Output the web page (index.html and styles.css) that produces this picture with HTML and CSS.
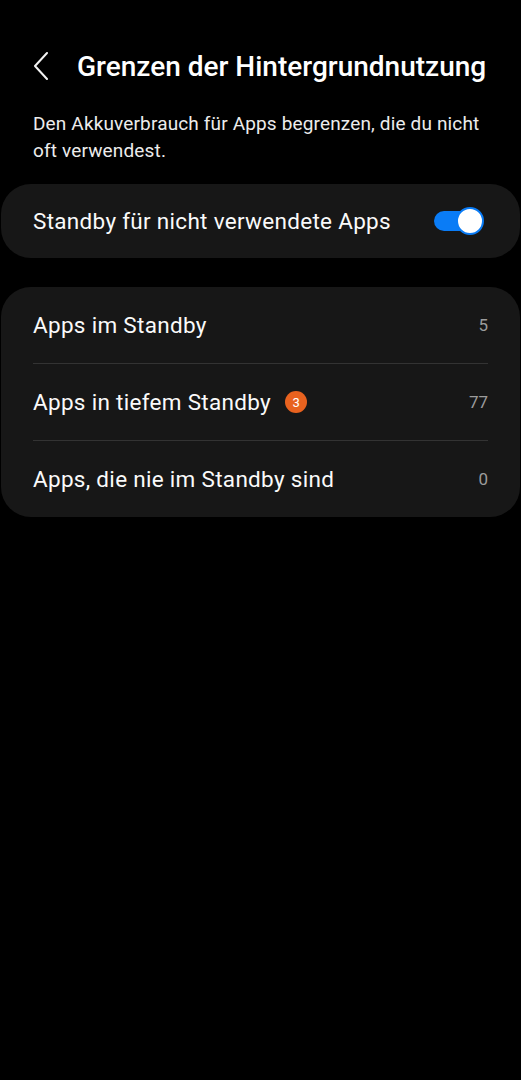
FILE: index.html
```html
<!DOCTYPE html>
<html lang="de">
<head>
    <meta charset="UTF-8">
    <meta name="viewport" content="width=device-width, initial-scale=1.0">
    <title>Grenzen der Hintergrundnutzung</title>
    <link rel="stylesheet" href="styles.css">
</head>
<body>
    <div class="header">
        <button class="back-btn" aria-label="Zurück">
            <svg width="16" height="28" viewBox="0 0 16 28"><path d="M14 1 L2 14 L14 27" fill="none" stroke="#f2f2f2" stroke-width="2" stroke-linecap="round" stroke-linejoin="round"/></svg>
        </button>
        <h1 class="title">Grenzen der Hintergrundnutzung</h1>
    </div>
    <p class="description">Den Akkuverbrauch für Apps begrenzen, die du nicht oft verwendest.</p>

    <div class="card toggle-card">
        <span class="row-label">Standby für nicht verwendete Apps</span>
        <div class="switch"><div class="knob"></div></div>
    </div>

    <div class="card list-card">
        <div class="list-row">
            <span class="row-label">Apps im Standby</span>
            <span class="row-value">5</span>
        </div>
        <div class="list-row">
            <span class="row-label">Apps in tiefem Standby <span class="badge">3</span></span>
            <span class="row-value">77</span>
        </div>
        <div class="list-row">
            <span class="row-label">Apps, die nie im Standby sind</span>
            <span class="row-value">0</span>
        </div>
    </div>
</body>
</html>
```

FILE: styles.css
```css
html, body {
    margin: 0;
    background: #000;
}
body {
    font-family: Roboto, "Noto Sans", sans-serif;
    color: #fafafa;
}
.header {
    display: flex;
    align-items: center;
    height: 48px;
    margin-top: 42px;
    padding-left: 33px;
}
.back-btn {
    background: none;
    border: none;
    padding: 0;
    width: 44px;
    height: 28px;
    display: flex;
    align-items: center;
}
.title {
    margin: 0;
    font-size: 28px;
    font-weight: 500;
    color: #fff;
}
.description {
    margin: 20px 0 0;
    padding: 0 33px;
    font-size: 19px;
    letter-spacing: 0.15px;
    line-height: 27px;
    color: #ececec;
}
.card {
    background: #171717;
    border-radius: 30px;
    margin: 0 1px;
}
.toggle-card {
    display: flex;
    align-items: center;
    justify-content: space-between;
    height: 74px;
    margin-top: 20px;
    padding: 0 38px 0 32px;
}
.row-label {
    font-size: 22.5px;
    letter-spacing: 0.3px;
    display: flex;
    align-items: center;
}
.switch {
    position: relative;
    width: 48px;
    height: 20px;
    border-radius: 10px;
    background: #0a7cf6;
}
.knob {
    position: absolute;
    right: -2px;
    top: -4px;
    width: 24px;
    height: 24px;
    border-radius: 50%;
    background: #fff;
    border: 2px solid #0a7cf6;
}
.list-card {
    margin-top: 29px;
    padding: 0 32px;
}
.list-row {
    display: flex;
    align-items: center;
    justify-content: space-between;
    height: 76px;
    border-bottom: 1px solid #333;
}
.list-row:last-child {
    border-bottom: none;
}
.row-value {
    font-size: 17px;
    color: #9c9c9c;
}
.badge {
    display: inline-flex;
    align-items: center;
    justify-content: center;
    width: 22px;
    height: 22px;
    margin-left: 14px;
    border-radius: 50%;
    background: #e8621f;
    color: #fff;
    font-size: 13px;
    letter-spacing: 0;
}
```
